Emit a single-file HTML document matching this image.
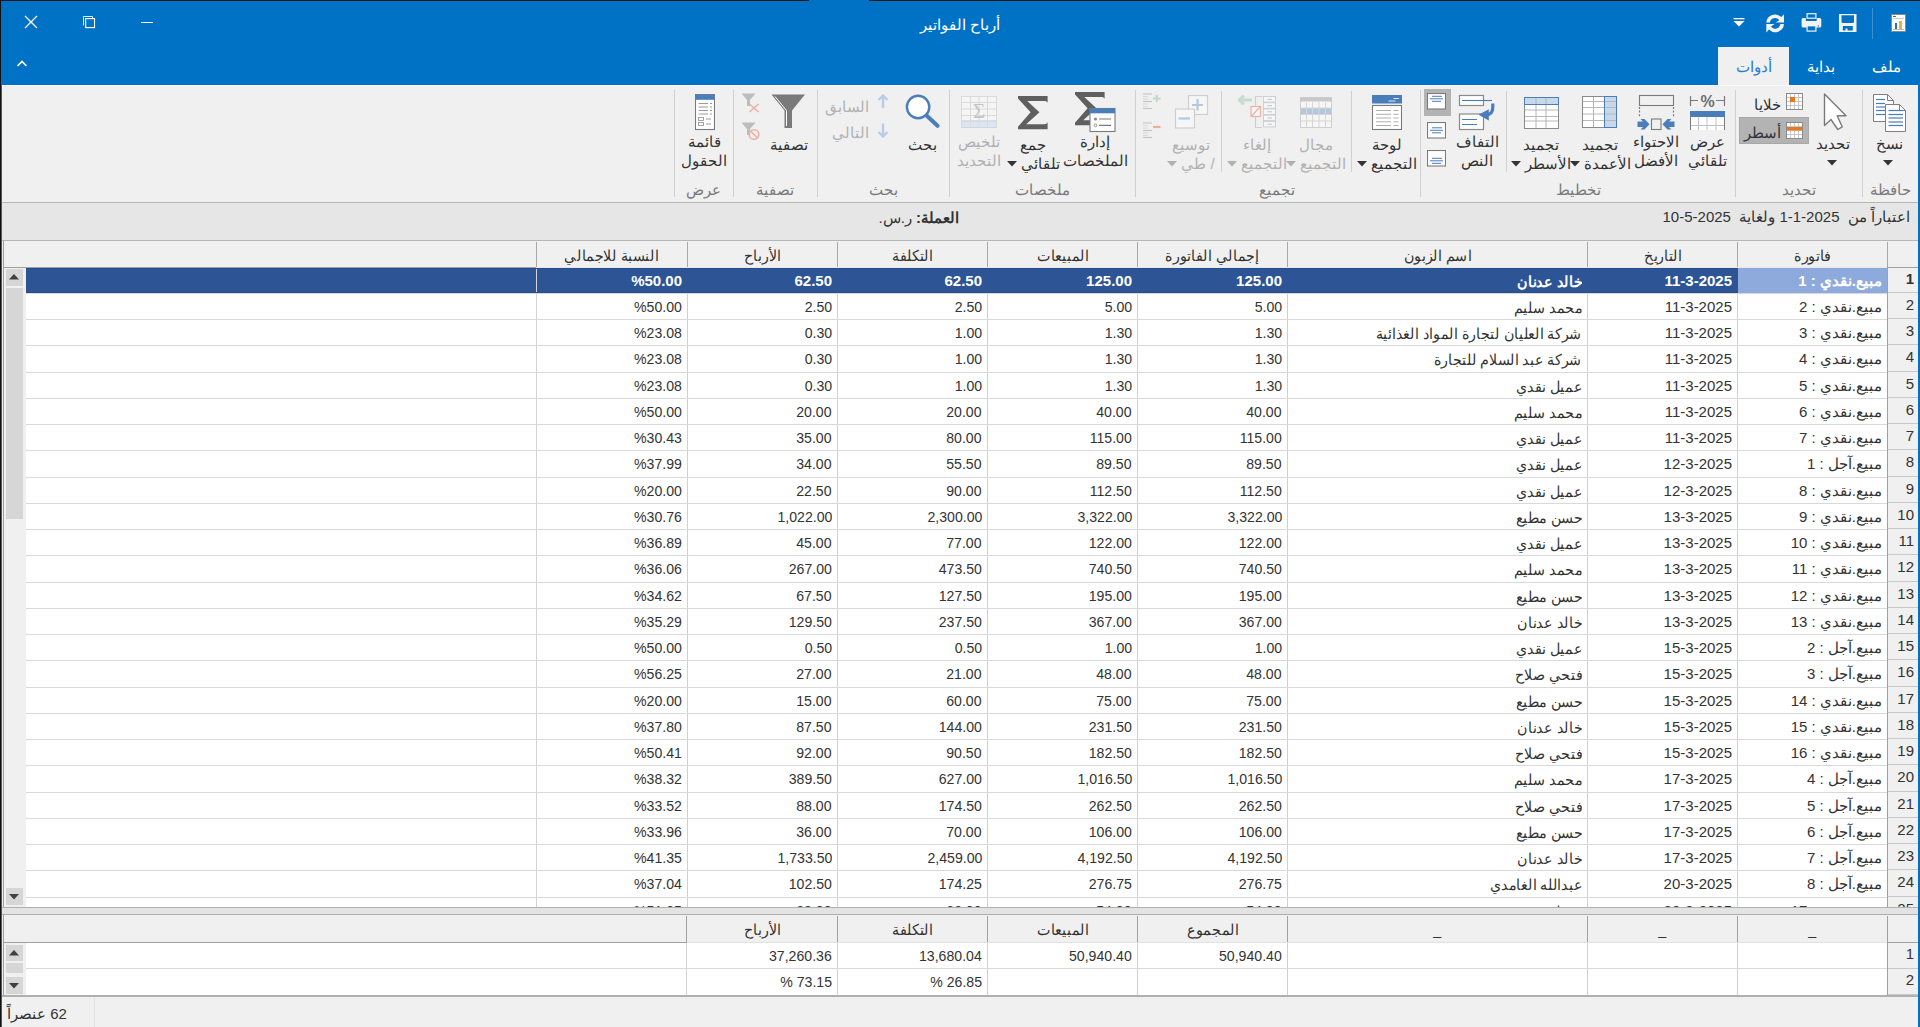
<!DOCTYPE html><html><head><meta charset="utf-8"><style>
*{box-sizing:border-box;margin:0;padding:0}
html,body{width:1920px;height:1027px;overflow:hidden;background:#F0F0F0}
body{position:relative;font-family:"Liberation Sans",sans-serif;font-size:15px;color:#333}
.abs{position:absolute}
.t{position:absolute;white-space:nowrap;line-height:17px}
.r{direction:rtl}
.hl{position:absolute;height:1px}
.vl{position:absolute;width:1px}
.lbl{color:#7A7A7A}
.dis{color:#B0B0B0}
.cell{position:absolute;white-space:nowrap;overflow:hidden;line-height:17px;padding-bottom:6px;direction:rtl;text-align:right}
.num{direction:ltr;unicode-bidi:embed}
</style></head><body>
<div class="abs" style="left:0;top:0;width:1920px;height:85px;background:#0072C6"></div>
<div class="abs" style="left:0;top:0;width:1920px;height:1px;background:#1a1a1a"></div>
<div class="abs" style="left:809px;top:0;width:60px;height:1px;background:#0072C6"></div>
<div class="abs" style="left:0;top:0;width:1px;height:1027px;background:#101010"></div>
<div class="abs" style="left:1px;top:1px;width:1px;height:1026px;background:#0072C6"></div>
<div class="abs" style="left:1918px;top:1px;width:2px;height:1026px;background:#0072C6"></div>
<div class="t r" style="left:860px;width:200px;top:16px;text-align:center;color:#fff;font-size:15px">أرباح الفواتير</div>
<svg class="abs" style="left:24px;top:15px" width="14" height="14" viewBox="0 0 14 14"><path d="M1 1L13 13M13 1L1 13" stroke="#fff" stroke-width="1.3"/></svg>
<svg class="abs" style="left:82px;top:15px" width="15" height="15" viewBox="0 0 15 15"><path d="M1.5 10.5V1.5H10.5V3" fill="none" stroke="#e8eef6" stroke-width="1"/><rect x="3.7" y="3.6" width="8.8" height="9" fill="none" stroke="#fff" stroke-width="1.1"/></svg>
<div class="abs" style="left:141px;top:22px;width:12px;height:1px;background:#fff"></div>
<div class="abs" style="left:1872px;top:8px;width:1px;height:31px;background:#3d8fd3"></div>
<svg class="abs" style="left:1891px;top:14px" width="15" height="18" viewBox="0 0 15 18"><rect x="0.5" y="0.5" width="14" height="17" fill="#fff" stroke="#8a8a8a"/><rect x="2" y="2" width="3" height="1" fill="#2f6db5"/><rect x="2" y="4" width="11" height="1" fill="#ccc"/><rect x="4" y="9" width="2" height="6" fill="#2f6db5"/><rect x="8" y="7" width="3" height="8" fill="#e8b04a"/><rect x="2" y="15" width="11" height="1" fill="#bbb"/></svg>
<svg class="abs" style="left:1839px;top:14px" width="18" height="18" viewBox="0 0 18 18"><path d="M0 0H17.5V18H0Z M2.5 1.3V7.5Q2.5 9 4 9H13.5Q15 9 15 7.5V1.3Z M3.8 12V16.5H6.5V14.5H8.5V16.5H13.8V12Z" fill="#f2f2f2" fill-rule="evenodd"/></svg>
<svg class="abs" style="left:1801px;top:13px" width="21" height="20" viewBox="0 0 21 20"><path d="M2.2 5H4.8V7.9H15.7V5H18.7Q20.3 5 20.3 6.6V13Q20.3 14.6 18.7 14.6H2.2Q0.6 14.6 0.6 13V6.6Q0.6 5 2.2 5Z" fill="#f2f2f2"/><rect x="5.5" y="0.1" width="10" height="5.7" fill="#f2f2f2"/><rect x="6.7" y="1.3" width="7.6" height="3.3" fill="#0072C6"/><rect x="5.5" y="12.3" width="10" height="6.4" fill="#f2f2f2"/><rect x="6.7" y="13.4" width="7.6" height="4.1" fill="#0072C6"/><circle cx="17.4" cy="12.9" r="0.75" fill="#0072C6"/></svg>
<svg class="abs" style="left:1765px;top:13px" width="21" height="21" viewBox="0 0 21 21"><g fill="#f2f2f2"><path id="rh" d="M1.3 9.6A8.8 8.8 0 0 1 16.3 4.1L19 1.3V9.6H10.8L14.3 7.2A5.2 5.2 0 0 0 4.9 9.6Z"/><path d="M1.3 9.6A8.8 8.8 0 0 1 16.3 4.1L19 1.3V9.6H10.8L14.3 7.2A5.2 5.2 0 0 0 4.9 9.6Z" transform="rotate(180 10.15 10.35)"/></g></svg>
<svg class="abs" style="left:1733px;top:18px" width="12" height="9" viewBox="0 0 12 9"><rect x="0.5" y="0" width="11" height="1.3" fill="#fff"/><path d="M0.5 3H11.5L6 8.5Z" fill="#fff"/></svg>
<div class="abs" style="left:1718px;top:47px;width:71px;height:38px;background:#F0F0F0"></div>
<div class="t r" style="left:1718px;width:71px;top:58px;text-align:center;color:#2E7BCF;font-size:15px">أدوات</div>
<div class="t r" style="left:1795px;width:52px;top:58px;text-align:center;color:#fff;font-size:15px">بداية</div>
<div class="t r" style="left:1862px;width:48px;top:58px;text-align:center;color:#fff;font-size:15px">ملف</div>
<svg class="abs" style="left:16px;top:59px" width="12" height="9" viewBox="0 0 12 9"><path d="M1.5 7L6 2.5L10.5 7" fill="none" stroke="#fff" stroke-width="1.6"/></svg>
<div class="abs" style="left:2px;top:85px;width:1916px;height:1px;background:#fbfbfb"></div>
<div class="abs" style="left:2px;top:202px;width:1916px;height:1px;background:#B6B6B6"></div>
<div class="vl" style="left:674px;top:90px;height:107px;background:#D0D0D0"></div>
<div class="vl" style="left:733px;top:90px;height:107px;background:#D0D0D0"></div>
<div class="vl" style="left:817px;top:90px;height:107px;background:#D0D0D0"></div>
<div class="vl" style="left:949px;top:90px;height:107px;background:#D0D0D0"></div>
<div class="vl" style="left:1135px;top:90px;height:107px;background:#D0D0D0"></div>
<div class="vl" style="left:1420px;top:90px;height:107px;background:#D0D0D0"></div>
<div class="vl" style="left:1735px;top:90px;height:107px;background:#D0D0D0"></div>
<div class="vl" style="left:1862px;top:90px;height:107px;background:#D0D0D0"></div>
<div class="vl" style="left:1221px;top:91px;height:81px;background:#D0D0D0"></div>
<div class="vl" style="left:1351px;top:91px;height:81px;background:#D0D0D0"></div>
<div class="vl" style="left:1506px;top:91px;height:81px;background:#D0D0D0"></div>
<div class="t r lbl" style="left:1830px;width:120px;top:181px;text-align:center">حافظة</div>
<div class="t r lbl" style="left:1739px;width:120px;top:181px;text-align:center">تحديد</div>
<div class="t r lbl" style="left:1518px;width:120px;top:181px;text-align:center">تخطيط</div>
<div class="t r lbl" style="left:1217px;width:120px;top:181px;text-align:center">تجميع</div>
<div class="t r lbl" style="left:982px;width:120px;top:181px;text-align:center">ملخصات</div>
<div class="t r lbl" style="left:823px;width:120px;top:181px;text-align:center">بحث</div>
<div class="t r lbl" style="left:715px;width:120px;top:181px;text-align:center">تصفية</div>
<div class="t r lbl" style="left:643px;width:120px;top:181px;text-align:center">عرض</div>
<div class="t r " style="left:1819px;width:140px;top:135px;text-align:center">نسخ</div>
<svg class="abs" style="left:1883px;top:160px" width="10" height="6" viewBox="0 0 10 6"><path d="M0 0H10L5 5.5Z" fill="#333"/></svg>
<div class="t r " style="left:1763px;width:140px;top:135px;text-align:center">تحديد</div>
<svg class="abs" style="left:1827px;top:160px" width="10" height="6" viewBox="0 0 10 6"><path d="M0 0H10L5 5.5Z" fill="#333"/></svg>
<div class="t r " style="left:1637px;width:140px;top:133px;text-align:center">عرض</div>
<div class="t r " style="left:1637px;width:140px;top:152px;text-align:center">تلقائي</div>
<div class="t r " style="left:1586px;width:140px;top:133px;text-align:center">الاحتواء</div>
<div class="t r " style="left:1586px;width:140px;top:152px;text-align:center">الأفضل</div>
<div class="t r " style="left:1530px;width:140px;top:136px;text-align:center">تجميد</div>
<div class="t r " style="left:1530px;width:140px;top:155px;text-align:center">الأعمدة<svg style="display:inline-block;vertical-align:middle;margin-right:4px;position:relative;top:-1px" width="10" height="6" viewBox="0 0 10 6"><path d="M0 0H10L5 5.5Z" fill="#333"/></svg></div>
<div class="t r " style="left:1471px;width:140px;top:136px;text-align:center">تجميد</div>
<div class="t r " style="left:1471px;width:140px;top:155px;text-align:center">الأسطر<svg style="display:inline-block;vertical-align:middle;margin-right:4px;position:relative;top:-1px" width="10" height="6" viewBox="0 0 10 6"><path d="M0 0H10L5 5.5Z" fill="#333"/></svg></div>
<div class="t r " style="left:1407px;width:140px;top:133px;text-align:center">التفاف</div>
<div class="t r " style="left:1407px;width:140px;top:152px;text-align:center">النص</div>
<div class="t r " style="left:1317px;width:140px;top:136px;text-align:center">لوحة</div>
<div class="t r " style="left:1317px;width:140px;top:155px;text-align:center">التجميع<svg style="display:inline-block;vertical-align:middle;margin-right:4px;position:relative;top:-1px" width="10" height="6" viewBox="0 0 10 6"><path d="M0 0H10L5 5.5Z" fill="#333"/></svg></div>
<div class="t r dis" style="left:1246px;width:140px;top:136px;text-align:center">مجال</div>
<div class="t r dis" style="left:1246px;width:140px;top:155px;text-align:center">التجميع<svg style="display:inline-block;vertical-align:middle;margin-right:4px;position:relative;top:-1px" width="10" height="6" viewBox="0 0 10 6"><path d="M0 0H10L5 5.5Z" fill="#b0b0b0"/></svg></div>
<div class="t r dis" style="left:1187px;width:140px;top:136px;text-align:center">إلغاء</div>
<div class="t r dis" style="left:1187px;width:140px;top:155px;text-align:center">التجميع<svg style="display:inline-block;vertical-align:middle;margin-right:4px;position:relative;top:-1px" width="10" height="6" viewBox="0 0 10 6"><path d="M0 0H10L5 5.5Z" fill="#b0b0b0"/></svg></div>
<div class="t r dis" style="left:1121px;width:140px;top:136px;text-align:center">توسيع</div>
<div class="t r dis" style="left:1121px;width:140px;top:155px;text-align:center">/ طي<svg style="display:inline-block;vertical-align:middle;margin-right:4px;position:relative;top:-1px" width="10" height="6" viewBox="0 0 10 6"><path d="M0 0H10L5 5.5Z" fill="#b0b0b0"/></svg></div>
<div class="t r " style="left:1025px;width:140px;top:133px;text-align:center">إدارة</div>
<div class="t r " style="left:1025px;width:140px;top:152px;text-align:center">الملخصات</div>
<div class="t r " style="left:963px;width:140px;top:136px;text-align:center">جمع</div>
<div class="t r " style="left:963px;width:140px;top:155px;text-align:center">تلقائي<svg style="display:inline-block;vertical-align:middle;margin-right:4px;position:relative;top:-1px" width="10" height="6" viewBox="0 0 10 6"><path d="M0 0H10L5 5.5Z" fill="#333"/></svg></div>
<div class="t r dis" style="left:909px;width:140px;top:133px;text-align:center">تلخيص</div>
<div class="t r dis" style="left:909px;width:140px;top:152px;text-align:center">التحديد</div>
<div class="t r " style="left:852px;width:140px;top:136px;text-align:center">بحث</div>
<div class="t r " style="left:719px;width:140px;top:136px;text-align:center">تصفية</div>
<div class="t r " style="left:634px;width:140px;top:133px;text-align:center">قائمة</div>
<div class="t r " style="left:634px;width:140px;top:152px;text-align:center">الحقول</div>
<div class="t r" style="right:139px;top:96px">خلايا</div>
<div class="abs" style="left:1739px;top:117px;width:70px;height:27px;background:#B3B3B3;border:1px solid #A8A8A8"></div>
<div class="t r" style="right:139px;top:124px">أسطر</div>
<div class="t r dis" style="right:1051px;top:98px">السابق</div>
<div class="t r dis" style="right:1051px;top:124px">التالي</div>
<div class="abs" style="left:1424px;top:89px;width:27px;height:27px;background:#B3B3B3"></div>
<svg class="abs" style="left:1872px;top:93px" width="36" height="40" viewBox="0 0 36 40"><path d="M1.5 1.5H15.5L21.5 7.5V28.5H1.5Z" fill="#fff" stroke="#7F7F7F"/><path d="M15.5 1.5V7.5H21.5" fill="none" stroke="#7F7F7F"/><path d="M4 6.5H13" stroke="#4A7EBB" stroke-width="1.2"/><path d="M4 10.5H13" stroke="#4A7EBB" stroke-width="1.2"/><path d="M4 14H13" stroke="#4A7EBB" stroke-width="1.2"/><path d="M4 17.5H13" stroke="#4A7EBB" stroke-width="1.2"/><path d="M4 21.5H13" stroke="#4A7EBB" stroke-width="1.2"/><path d="M13.5 11.5H27.5L33.5 17.5V38.5H13.5Z" fill="#fff" stroke="#7F7F7F"/><path d="M27.5 11.5V17.5H33.5" fill="none" stroke="#7F7F7F"/><path d="M16.5 17.5H31" stroke="#4A7EBB" stroke-width="1.2"/><path d="M16.5 21.5H31" stroke="#4A7EBB" stroke-width="1.2"/><path d="M16.5 25H31" stroke="#4A7EBB" stroke-width="1.2"/><path d="M16.5 29H31" stroke="#4A7EBB" stroke-width="1.2"/><path d="M16.5 32.5H31" stroke="#4A7EBB" stroke-width="1.2"/></svg>
<svg class="abs" style="left:1822px;top:92px" width="27" height="40" viewBox="0 0 27 40"><path d="M2.5 2L2.5 33.5L9 27.5L15.8 37.5L20.2 34.8L15.2 23.8H24Z" fill="#fff" stroke="#7A7A7A" stroke-width="1.4" stroke-linejoin="round"/></svg>
<svg class="abs" style="left:1786px;top:93px" width="17" height="17" viewBox="0 0 17 17"><rect x="0.5" y="0.5" width="16" height="16" fill="#fff" stroke="#8A8A8A"/><path d="M4.5 1V16M1 4.5H16" stroke="#C8C8C8"/><path d="M8.5 1V16M1 8.5H16" stroke="#C8C8C8"/><path d="M12.5 1V16M1 12.5H16" stroke="#C8C8C8"/><rect x="5" y="5" width="3" height="3" fill="#E87722"/><rect x="4" y="4" width="5" height="5" fill="#E87722"/></svg>
<svg class="abs" style="left:1786px;top:122px" width="17" height="17" viewBox="0 0 17 17"><rect x="0.5" y="0.5" width="16" height="16" fill="#fff" stroke="#8A8A8A"/><path d="M4.5 1V16M1 4.5H16" stroke="#C8C8C8"/><path d="M8.5 1V16M1 8.5H16" stroke="#C8C8C8"/><path d="M12.5 1V16M1 12.5H16" stroke="#C8C8C8"/><rect x="1" y="5" width="15" height="3.5" fill="#E87722"/></svg>
<svg class="abs" style="left:1689px;top:94px" width="37" height="37" viewBox="0 0 37 37"><path d="M1.5 2V12M1.5 6.5H9M35.5 2V12M35.5 6.5H27" stroke="#7A7A7A" stroke-width="1.2"/><text x="18.5" y="13.3" text-anchor="middle" font-family="Liberation Sans" font-weight="bold" font-size="16" fill="#6f6f6f">%</text><rect x="1" y="17" width="35" height="6" fill="#4A7EBB"/><rect x="1.5" y="23" width="34" height="13" fill="#fff"/><path d="M9.5 23V36M18 23V36M27 23V36M1.5 31.5H35.5" stroke="#C0C0C0"/><path d="M1.5 23V36M35.5 23V36" stroke="#7A7A7A"/></svg>
<svg class="abs" style="left:1637px;top:94px" width="38" height="37" viewBox="0 0 38 37"><rect x="2.5" y="1.5" width="34" height="10" fill="none" stroke="#7A7A7A" stroke-width="1.1"/><path d="M2.5 13V23M36.5 13V23" stroke="#7A7A7A" stroke-width="1.2" stroke-dasharray="2 1.6"/><rect x="14.5" y="25" width="9.5" height="10.5" fill="none" stroke="#7A7A7A" stroke-width="1.1"/><path d="M0.5 27.5H6L3.5 25H7.5L12.5 30.3L7.5 35.5H3.5L6 33H0.5Z" fill="#4A7EBB"/><path d="M37.5 27.5H32L34.5 25H30.5L25.5 30.3L30.5 35.5H34.5L32 33H37.5Z" fill="#4A7EBB"/></svg>
<svg class="abs" style="left:1582px;top:96px" width="36" height="33" viewBox="0 0 36 33"><rect x="0.5" y="0.5" width="34" height="31" fill="#fff" stroke="#8A8A8A" stroke-width="1"/><rect x="22.5" y="0.5" width="12" height="31" fill="#C5D8EC" stroke="#4A7EBB"/><path d="M11.5 1V31" stroke="#B4B4B4"/><path d="M1 5.5H34" stroke="#B8B8B8"/><path d="M1 11.5H34" stroke="#B8B8B8"/><path d="M1 18H34" stroke="#B8B8B8"/><path d="M1 24.5H34" stroke="#B8B8B8"/><rect x="22.5" y="0.5" width="12" height="31" fill="none" stroke="#4A7EBB"/></svg>
<svg class="abs" style="left:1524px;top:97px" width="36" height="33" viewBox="0 0 36 33"><rect x="0.5" y="0.5" width="34" height="31" fill="#fff" stroke="#8A8A8A"/><rect x="0.5" y="0.5" width="34" height="7" fill="#C5D8EC" stroke="#4A7EBB"/><path d="M12 1V31M22 1V31" stroke="#B4B4B4"/><path d="M1 13H34" stroke="#B8B8B8"/><path d="M1 19.5H34" stroke="#B8B8B8"/><path d="M1 24H34" stroke="#B8B8B8"/><rect x="0.5" y="0.5" width="34" height="7" fill="none" stroke="#4A7EBB"/></svg>
<svg class="abs" style="left:1458px;top:94px" width="39" height="37" viewBox="0 0 39 37"><rect x="1.5" y="1.5" width="24" height="10" fill="#fff" stroke="#8A8A8A" stroke-width="1.2"/><path d="M4 6.5H34" stroke="#4A7EBB" stroke-width="1.1"/><rect x="1.5" y="20" width="24" height="15.5" fill="#fff" stroke="#8A8A8A" stroke-width="1.2"/><path d="M4 25.5H19M4 30.5H19" stroke="#4A7EBB" stroke-width="1.2"/><path d="M34.8 9.5V13Q34.8 20.8 28 20.8" fill="none" stroke="#4A7EBB" stroke-width="3.2"/><path d="M20.5 20.8L30.8 15.3V26.5Z" fill="#4A7EBB"/></svg>
<svg class="abs" style="left:1427px;top:93px" width="19" height="17" viewBox="0 0 19 17"><rect x="0.5" y="0.5" width="18" height="15.5" fill="#fff" stroke="#7A7A7A" stroke-width="1.1"/><path d="M5 3.3H15M3 5.8H16M5 8.3H14" stroke="#4A7EBB" stroke-width="1"/></svg>
<svg class="abs" style="left:1427px;top:122px" width="19" height="17" viewBox="0 0 19 17"><rect x="0.5" y="0.5" width="18" height="15.5" fill="#fff" stroke="#7A7A7A" stroke-width="1.1"/><path d="M5 5.8H15M3 8.3H16M5 10.8H14" stroke="#4A7EBB" stroke-width="1"/></svg>
<svg class="abs" style="left:1427px;top:150px" width="19" height="17" viewBox="0 0 19 17"><rect x="0.5" y="0.5" width="18" height="15.5" fill="#fff" stroke="#7A7A7A" stroke-width="1.1"/><path d="M5 8.3H15M3 10.8H16M5 13.3H14" stroke="#4A7EBB" stroke-width="1"/></svg>
<svg class="abs" style="left:1372px;top:95px" width="30" height="35" viewBox="0 0 30 35"><rect x="0" y="0" width="30" height="8.5" fill="#4A7EBB"/><path d="M16.5 6H23.5M21.5 3.5H27" stroke="#dfe8f3" stroke-width="1"/><rect x="0.5" y="10.5" width="29" height="24" fill="#fff" stroke="#7A7A7A" stroke-width="1.1"/><path d="M4 15.5H19M21.5 15.5H26.5" stroke="#AFAFAF" stroke-width="1"/><path d="M4 19.3H19M21.5 19.3H26.5" stroke="#AFAFAF" stroke-width="1"/><path d="M4 23H19M21.5 23H26.5" stroke="#AFAFAF" stroke-width="1"/><path d="M4 26.8H19M21.5 26.8H26.5" stroke="#AFAFAF" stroke-width="1"/><path d="M4 30.5H19M21.5 30.5H26.5" stroke="#AFAFAF" stroke-width="1"/></svg>
<svg class="abs" style="left:1300px;top:97px" width="32" height="31" viewBox="0 0 32 31"><rect x="0.5" y="0.5" width="31" height="30" fill="#F6F6F6" stroke="#CFCFCF"/><rect x="0.5" y="0.5" width="31" height="4" fill="#C8C8C8"/><rect x="1" y="11" width="30" height="6" fill="#B4C8DC"/><path d="M6.5 5V30" stroke="#D6D6D6"/><path d="M12.5 5V30" stroke="#D6D6D6"/><path d="M19 5V30" stroke="#D6D6D6"/><path d="M25.5 5V30" stroke="#D6D6D6"/><path d="M1 11H31" stroke="#D6D6D6"/><path d="M1 17.5H31" stroke="#D6D6D6"/><path d="M1 24H31" stroke="#D6D6D6"/></svg>
<svg class="abs" style="left:1238px;top:95px" width="38" height="35" viewBox="0 0 38 35"><path d="M0.5 5H14M6 0.5L1 5L6 9.5" fill="none" stroke="#C6DBD1" stroke-width="3"/><path d="M24 1.5H17.5V11M17.5 22V32.5H24" fill="none" stroke="#CFCFCF" stroke-width="1.2"/><rect x="13" y="11.5" width="9.5" height="10" fill="#F6F6F6" stroke="#E8B2A4" stroke-width="1.2"/><path d="M13.5 21L22 12" stroke="#E8B2A4" stroke-width="1.2"/><rect x="25.5" y="1.5" width="12" height="5.6" fill="#F6F6F6" stroke="#CFCFCF"/><path d="M29.5 4.4H34" stroke="#B4C8DC"/><rect x="25.5" y="7.7" width="12" height="5.6" fill="#F6F6F6" stroke="#CFCFCF"/><path d="M29.5 10.6H34" stroke="#B4C8DC"/><rect x="25.5" y="13.9" width="12" height="5.6" fill="#F6F6F6" stroke="#CFCFCF"/><path d="M29.5 16.8H34" stroke="#B4C8DC"/><rect x="25.5" y="20.1" width="12" height="5.6" fill="#F6F6F6" stroke="#CFCFCF"/><path d="M29.5 23.0H34" stroke="#B4C8DC"/><rect x="25.5" y="26.3" width="12" height="5.6" fill="#F6F6F6" stroke="#CFCFCF"/><path d="M29.5 29.2H34" stroke="#B4C8DC"/></svg>
<svg class="abs" style="left:1174px;top:95px" width="35" height="35" viewBox="0 0 35 35"><rect x="14.5" y="0.5" width="19" height="19" fill="#F6F6F6" stroke="#CFCFCF" stroke-width="1.2"/><path d="M18 10H29M23.5 4V15.5" stroke="#B4C8DC" stroke-width="2.2"/><rect x="1.5" y="14" width="19" height="19" fill="#F6F6F6" stroke="#CFCFCF" stroke-width="1.2"/><path d="M4.5 23.5H16" stroke="#B4C8DC" stroke-width="2.2"/></svg>
<svg class="abs" style="left:1143px;top:93px" width="18" height="17" viewBox="0 0 18 17"><path d="M0 1H9" stroke="#C4C4C4" stroke-width="1.1"/><path d="M0 3.5H5" stroke="#DADADA" stroke-width="1.1"/><path d="M0 6H5" stroke="#DADADA" stroke-width="1.1"/><path d="M0 8.5H9" stroke="#C4C4C4" stroke-width="1.1"/><path d="M0 11H5" stroke="#DADADA" stroke-width="1.1"/><path d="M0 13.5H5" stroke="#DADADA" stroke-width="1.1"/><path d="M0 15.5H9" stroke="#C4C4C4" stroke-width="1.1"/><path d="M10 5.5H17.5M13.8 1.8V9.2" stroke="#C0DACB" stroke-width="2.2"/></svg>
<svg class="abs" style="left:1143px;top:122px" width="18" height="17" viewBox="0 0 18 17"><path d="M0 1H9" stroke="#C4C4C4" stroke-width="1.1"/><path d="M0 3.5H5" stroke="#DADADA" stroke-width="1.1"/><path d="M0 6H5" stroke="#DADADA" stroke-width="1.1"/><path d="M0 8.5H9" stroke="#C4C4C4" stroke-width="1.1"/><path d="M0 11H5" stroke="#DADADA" stroke-width="1.1"/><path d="M0 13.5H5" stroke="#DADADA" stroke-width="1.1"/><path d="M0 15.5H9" stroke="#C4C4C4" stroke-width="1.1"/><path d="M10 5H17.5" stroke="#EBAE9C" stroke-width="2.2"/></svg>
<svg class="abs" style="left:1075px;top:92px" width="41" height="41" viewBox="0 0 41 41"><path transform="scale(1.0)" d="M0 0H29.6V6.8C29 5.4 28 4.9 26 4.9H9.3L21.4 16.3L8.2 28.2H26.2C28 28.2 29 27.6 29.6 26V33.2H0V30.8L12.6 16.3L0 2.6Z" fill="#5F5F5F"/><rect x="15" y="16.5" width="25" height="23" fill="#fff" stroke="#7A7A7A" stroke-width="1.1"/><rect x="15" y="16.5" width="25" height="4.8" fill="#4A7EBB"/><circle cx="20.5" cy="27" r="1.6" fill="#8a8a8a"/><circle cx="20.5" cy="33.3" r="1.4" fill="none" stroke="#8a8a8a" stroke-width="0.9"/><path d="M24 27H36M24 33.3H36" stroke="#7a7a7a" stroke-width="1.2"/></svg>
<svg class="abs" style="left:1018px;top:96px" width="30" height="34" viewBox="0 0 30 34"><path transform="scale(1.0)" d="M0 0H29.6V6.8C29 5.4 28 4.9 26 4.9H9.3L21.4 16.3L8.2 28.2H26.2C28 28.2 29 27.6 29.6 26V33.2H0V30.8L12.6 16.3L0 2.6Z" fill="#5F5F5F"/></svg>
<svg class="abs" style="left:961px;top:96px" width="36" height="33" viewBox="0 0 36 33"><rect x="0.5" y="0.5" width="35" height="31" fill="#F5F5F5" stroke="#DADADA"/><rect x="1" y="25" width="34" height="6.5" fill="#DDE6F0"/><path d="M9.5 1V31" stroke="#DADADA"/><path d="M18 1V31" stroke="#DADADA"/><path d="M26.5 1V31" stroke="#DADADA"/><path d="M1 6.5H35" stroke="#DADADA"/><path d="M1 13H35" stroke="#DADADA"/><path d="M1 19.5H35" stroke="#DADADA"/><path d="M1 25H35" stroke="#DADADA"/><path d="M1 25H35M0.5 31.5H35.5" stroke="#C9D7E6"/><text x="18" y="21.5" text-anchor="middle" font-family="Liberation Serif" font-size="21" fill="#C4C4C4">Σ</text></svg>
<svg class="abs" style="left:905px;top:94px" width="35" height="36" viewBox="0 0 35 36"><circle cx="13.1" cy="13" r="11.2" fill="#fff" stroke="#4A7EBB" stroke-width="2.4"/><path d="M21.5 21.5L32.5 31.8" stroke="#4A7EBB" stroke-width="4" stroke-linecap="round"/></svg>
<svg class="abs" style="left:877px;top:94px" width="12" height="15" viewBox="0 0 12 15"><path d="M6 1.5V14M1.5 6L6 1.5L10.5 6" fill="none" stroke="#B8CDE4" stroke-width="2.4"/></svg>
<svg class="abs" style="left:877px;top:123px" width="12" height="15" viewBox="0 0 12 15"><path d="M6 0.5V13M1.5 9L6 13.5L10.5 9" fill="none" stroke="#B8CDE4" stroke-width="2.4"/></svg>
<svg class="abs" style="left:771px;top:94px" width="35" height="35" viewBox="0 0 35 35"><path d="M0.5 0.5H34L21 16.5V34H13.5V16.5Z" fill="#7A7A7A"/><path d="M4 2.5L15.5 16.5V32" fill="none" stroke="#fff" stroke-width="1"/></svg>
<svg class="abs" style="left:741px;top:93px" width="20" height="20" viewBox="0 0 20 20"><path d="M0.5 0.5H14.5L9 7V13H6V7Z" fill="#BDBDBD"/><path d="M8.5 11L17.5 19M17.5 11L8.5 19" stroke="#EBB1A2" stroke-width="1.6"/></svg>
<svg class="abs" style="left:741px;top:122px" width="20" height="20" viewBox="0 0 20 20"><path d="M0.5 0.5H14.5L9 7V13H6V7Z" fill="#BDBDBD"/><circle cx="13" cy="12.5" r="4.8" fill="#F0F0F0" stroke="#EBB1A2" stroke-width="1.6"/><path d="M10 9.5L16 15.5" stroke="#EBB1A2" stroke-width="1.6"/></svg>
<svg class="abs" style="left:695px;top:94px" width="20" height="37" viewBox="0 0 20 37"><rect x="0.5" y="0.5" width="19" height="35" fill="#fff" stroke="#7A7A7A" stroke-width="1.1"/><rect x="0.5" y="0.5" width="19" height="5.3" fill="#4A7EBB"/><path d="M3.5 9.5H13M15 9.5H17" stroke="#9A9A9A" stroke-width="1"/><path d="M3.5 13H13M15 13H17" stroke="#9A9A9A" stroke-width="1"/><path d="M3.5 16.5H13M15 16.5H17" stroke="#9A9A9A" stroke-width="1"/><path d="M3.5 20H13M15 20H17" stroke="#9A9A9A" stroke-width="1"/><rect x="3.5" y="23.5" width="5" height="3" fill="none" stroke="#9A9A9A" stroke-width="0.9"/><rect x="3.5" y="28.5" width="5" height="3" fill="none" stroke="#9A9A9A" stroke-width="0.9"/><path d="M11 25H16M11 30H16" stroke="#9A9A9A"/></svg>
<div class="abs" style="left:2px;top:203px;width:1916px;height:37px;background:#E6E6E6"></div>
<div class="abs" style="left:2px;top:240px;width:1916px;height:1px;background:#B6B6B6"></div>
<div class="t r" style="right:10px;top:208px"><span>اعتباراً من</span>&nbsp;&nbsp;<span class="num">1-1-2025</span> ولغاية&nbsp;&nbsp;<span class="num">10-5-2025</span></div>
<div class="t r" style="right:961px;top:209px"><b>العملة:</b> ر.س.</div>
<div class="abs" style="left:3px;top:241px;width:1915px;height:666px;background:#fff"></div>
<div class="vl" style="left:3px;top:241px;height:666px;background:#A0A0A0"></div>
<div class="abs" style="left:4px;top:241px;width:1914px;height:26px;background:#F0F0F0"></div>
<div class="hl" style="left:4px;top:267px;width:532px;background:#A0A0A0"></div>
<div class="hl" style="left:536px;top:267px;width:1351px;background:#E9E8E4"></div>
<div class="hl" style="left:1887px;top:267px;width:31px;background:#A0A0A0"></div>
<div class="vl" style="left:536px;top:242px;height:25px;background:#A8A8A8"></div>
<div class="vl" style="left:687px;top:242px;height:25px;background:#A8A8A8"></div>
<div class="vl" style="left:837px;top:242px;height:25px;background:#A8A8A8"></div>
<div class="vl" style="left:987px;top:242px;height:25px;background:#A8A8A8"></div>
<div class="vl" style="left:1137px;top:242px;height:25px;background:#A8A8A8"></div>
<div class="vl" style="left:1287px;top:242px;height:25px;background:#A8A8A8"></div>
<div class="vl" style="left:1587px;top:242px;height:25px;background:#A8A8A8"></div>
<div class="vl" style="left:1737px;top:242px;height:25px;background:#A8A8A8"></div>
<div class="vl" style="left:1887px;top:242px;height:25px;background:#A8A8A8"></div>
<div class="cell" style="left:1738px;width:149px;top:247px;text-align:center"><span style="display:inline-block;transform:scaleX(.95)">فاتورة</span></div>
<div class="cell" style="left:1588px;width:149px;top:247px;text-align:center"><span style="display:inline-block;transform:scaleX(.95)">التاريخ</span></div>
<div class="cell" style="left:1288px;width:299px;top:247px;text-align:center"><span style="display:inline-block;transform:scaleX(.95)">اسم الزبون</span></div>
<div class="cell" style="left:1138px;width:149px;top:247px;text-align:center"><span style="display:inline-block;transform:scaleX(.95)">إجمالي الفاتورة</span></div>
<div class="cell" style="left:988px;width:149px;top:247px;text-align:center"><span style="display:inline-block;transform:scaleX(.95)">المبيعات</span></div>
<div class="cell" style="left:838px;width:149px;top:247px;text-align:center"><span style="display:inline-block;transform:scaleX(.95)">التكلفة</span></div>
<div class="cell" style="left:688px;width:149px;top:247px;text-align:center"><span style="display:inline-block;transform:scaleX(.95)">الأرباح</span></div>
<div class="cell" style="left:537px;width:150px;top:247px;text-align:center"><span style="display:inline-block;transform:scaleX(.95)">النسبة للاجمالي</span></div>
<div class="abs" style="left:26px;top:268px;width:1892px;height:639px;overflow:hidden">
<div class="vl" style="left:510px;top:0;height:639px;background:#D4D4D4"></div>
<div class="vl" style="left:661px;top:0;height:639px;background:#C6D1E2"></div>
<div class="vl" style="left:811px;top:0;height:639px;background:#C6D1E2"></div>
<div class="vl" style="left:961px;top:0;height:639px;background:#C6D1E2"></div>
<div class="vl" style="left:1111px;top:0;height:639px;background:#C6D1E2"></div>
<div class="vl" style="left:1261px;top:0;height:639px;background:#C6D1E2"></div>
<div class="vl" style="left:1561px;top:0;height:639px;background:#C6D1E2"></div>
<div class="vl" style="left:1711px;top:0;height:639px;background:#C6D1E2"></div>
<div class="vl" style="left:1861px;top:0;height:639px;background:#A0A0A0"></div>
<div class="abs" style="left:0;top:0px;width:510px;height:25px;background:#2D5596"></div>
<div class="abs" style="left:511px;top:0px;width:1201px;height:25px;background:#2D5596"></div>
<div class="abs" style="left:0;top:0px;width:1712px;height:1px;background:#264D8F"></div>
<div class="abs" style="left:0;top:24px;width:1712px;height:1px;background:#264D8F"></div>
<div class="abs" style="left:1712px;top:0px;width:149px;height:25px;background:#8EA9DB"></div>
<div class="hl" style="left:0;top:25px;width:1861px;background:#D9D9D9"></div>
<div class="abs" style="left:1862px;top:-1px;width:30px;height:26px;background:#F0F0F0;border-bottom:1px solid #C8C8C8"></div>
<div class="cell" style="left:1862px;width:26px;top:2px;font-weight:bold;">1</div>
<div class="cell" style="left:1712px;width:144px;top:4px;font-weight:bold;color:#fff;">مبيع.نقدي : 1</div>
<div class="cell" style="left:1562px;width:144px;top:4px;font-weight:bold;color:#fff;">11-3-2025</div>
<div class="cell" style="left:1262px;width:294px;top:4px;font-weight:bold;color:#fff;"><span style="display:inline-block;transform:translateY(1px) scaleX(.95);transform-origin:100% 50%">خالد عدنان</span></div>
<div class="cell" style="left:1112px;width:144px;top:4px;font-weight:bold;color:#fff;">125.00</div>
<div class="cell" style="left:962px;width:144px;top:4px;font-weight:bold;color:#fff;">125.00</div>
<div class="cell" style="left:812px;width:144px;top:4px;font-weight:bold;color:#fff;">62.50</div>
<div class="cell" style="left:662px;width:144px;top:4px;font-weight:bold;color:#fff;">62.50</div>
<div class="cell" style="left:511px;width:145px;top:4px;font-weight:bold;color:#fff;">%50.00</div>
<div class="hl" style="left:0;top:51px;width:1861px;background:#D9D9D9"></div>
<div class="abs" style="left:1862px;top:25px;width:30px;height:26px;background:#F0F0F0;border-bottom:1px solid #C8C8C8"></div>
<div class="cell" style="left:1862px;width:26px;top:28px;">2</div>
<div class="cell" style="left:1712px;width:144px;top:30px;">مبيع.نقدي : 2</div>
<div class="cell" style="left:1562px;width:144px;top:30px;">11-3-2025</div>
<div class="cell" style="left:1262px;width:294px;top:30px;"><span style="display:inline-block;transform:translateY(1px) scaleX(.95);transform-origin:100% 50%">محمد سليم</span></div>
<div class="cell" style="left:1112px;width:144px;top:30px;"><span style="display:inline-block;transform:scaleX(.94);transform-origin:100% 50%">5.00</span></div>
<div class="cell" style="left:962px;width:144px;top:30px;"><span style="display:inline-block;transform:scaleX(.94);transform-origin:100% 50%">5.00</span></div>
<div class="cell" style="left:812px;width:144px;top:30px;"><span style="display:inline-block;transform:scaleX(.94);transform-origin:100% 50%">2.50</span></div>
<div class="cell" style="left:662px;width:144px;top:30px;"><span style="display:inline-block;transform:scaleX(.94);transform-origin:100% 50%">2.50</span></div>
<div class="cell" style="left:511px;width:145px;top:30px;"><span style="display:inline-block;transform:scaleX(.94);transform-origin:100% 50%">%50.00</span></div>
<div class="hl" style="left:0;top:77px;width:1861px;background:#D9D9D9"></div>
<div class="abs" style="left:1862px;top:51px;width:30px;height:26px;background:#F0F0F0;border-bottom:1px solid #C8C8C8"></div>
<div class="cell" style="left:1862px;width:26px;top:54px;">3</div>
<div class="cell" style="left:1712px;width:144px;top:56px;">مبيع.نقدي : 3</div>
<div class="cell" style="left:1562px;width:144px;top:56px;">11-3-2025</div>
<div class="cell" style="left:1262px;width:294px;top:56px;"><span style="display:inline-block;transform:translateY(1px) scaleX(.95);transform-origin:100% 50%">شركة العليان لتجارة المواد الغذائية</span></div>
<div class="cell" style="left:1112px;width:144px;top:56px;"><span style="display:inline-block;transform:scaleX(.94);transform-origin:100% 50%">1.30</span></div>
<div class="cell" style="left:962px;width:144px;top:56px;"><span style="display:inline-block;transform:scaleX(.94);transform-origin:100% 50%">1.30</span></div>
<div class="cell" style="left:812px;width:144px;top:56px;"><span style="display:inline-block;transform:scaleX(.94);transform-origin:100% 50%">1.00</span></div>
<div class="cell" style="left:662px;width:144px;top:56px;"><span style="display:inline-block;transform:scaleX(.94);transform-origin:100% 50%">0.30</span></div>
<div class="cell" style="left:511px;width:145px;top:56px;"><span style="display:inline-block;transform:scaleX(.94);transform-origin:100% 50%">%23.08</span></div>
<div class="hl" style="left:0;top:104px;width:1861px;background:#D9D9D9"></div>
<div class="abs" style="left:1862px;top:77px;width:30px;height:27px;background:#F0F0F0;border-bottom:1px solid #C8C8C8"></div>
<div class="cell" style="left:1862px;width:26px;top:80px;">4</div>
<div class="cell" style="left:1712px;width:144px;top:82px;">مبيع.نقدي : 4</div>
<div class="cell" style="left:1562px;width:144px;top:82px;">11-3-2025</div>
<div class="cell" style="left:1262px;width:294px;top:82px;"><span style="display:inline-block;transform:translateY(1px) scaleX(.95);transform-origin:100% 50%">شركة عبد السلام للتجارة</span></div>
<div class="cell" style="left:1112px;width:144px;top:82px;"><span style="display:inline-block;transform:scaleX(.94);transform-origin:100% 50%">1.30</span></div>
<div class="cell" style="left:962px;width:144px;top:82px;"><span style="display:inline-block;transform:scaleX(.94);transform-origin:100% 50%">1.30</span></div>
<div class="cell" style="left:812px;width:144px;top:82px;"><span style="display:inline-block;transform:scaleX(.94);transform-origin:100% 50%">1.00</span></div>
<div class="cell" style="left:662px;width:144px;top:82px;"><span style="display:inline-block;transform:scaleX(.94);transform-origin:100% 50%">0.30</span></div>
<div class="cell" style="left:511px;width:145px;top:82px;"><span style="display:inline-block;transform:scaleX(.94);transform-origin:100% 50%">%23.08</span></div>
<div class="hl" style="left:0;top:130px;width:1861px;background:#D9D9D9"></div>
<div class="abs" style="left:1862px;top:104px;width:30px;height:26px;background:#F0F0F0;border-bottom:1px solid #C8C8C8"></div>
<div class="cell" style="left:1862px;width:26px;top:107px;">5</div>
<div class="cell" style="left:1712px;width:144px;top:109px;">مبيع.نقدي : 5</div>
<div class="cell" style="left:1562px;width:144px;top:109px;">11-3-2025</div>
<div class="cell" style="left:1262px;width:294px;top:109px;"><span style="display:inline-block;transform:translateY(1px) scaleX(.95);transform-origin:100% 50%">عميل نقدي</span></div>
<div class="cell" style="left:1112px;width:144px;top:109px;"><span style="display:inline-block;transform:scaleX(.94);transform-origin:100% 50%">1.30</span></div>
<div class="cell" style="left:962px;width:144px;top:109px;"><span style="display:inline-block;transform:scaleX(.94);transform-origin:100% 50%">1.30</span></div>
<div class="cell" style="left:812px;width:144px;top:109px;"><span style="display:inline-block;transform:scaleX(.94);transform-origin:100% 50%">1.00</span></div>
<div class="cell" style="left:662px;width:144px;top:109px;"><span style="display:inline-block;transform:scaleX(.94);transform-origin:100% 50%">0.30</span></div>
<div class="cell" style="left:511px;width:145px;top:109px;"><span style="display:inline-block;transform:scaleX(.94);transform-origin:100% 50%">%23.08</span></div>
<div class="hl" style="left:0;top:156px;width:1861px;background:#D9D9D9"></div>
<div class="abs" style="left:1862px;top:130px;width:30px;height:26px;background:#F0F0F0;border-bottom:1px solid #C8C8C8"></div>
<div class="cell" style="left:1862px;width:26px;top:133px;">6</div>
<div class="cell" style="left:1712px;width:144px;top:135px;">مبيع.نقدي : 6</div>
<div class="cell" style="left:1562px;width:144px;top:135px;">11-3-2025</div>
<div class="cell" style="left:1262px;width:294px;top:135px;"><span style="display:inline-block;transform:translateY(1px) scaleX(.95);transform-origin:100% 50%">محمد سليم</span></div>
<div class="cell" style="left:1112px;width:144px;top:135px;"><span style="display:inline-block;transform:scaleX(.94);transform-origin:100% 50%">40.00</span></div>
<div class="cell" style="left:962px;width:144px;top:135px;"><span style="display:inline-block;transform:scaleX(.94);transform-origin:100% 50%">40.00</span></div>
<div class="cell" style="left:812px;width:144px;top:135px;"><span style="display:inline-block;transform:scaleX(.94);transform-origin:100% 50%">20.00</span></div>
<div class="cell" style="left:662px;width:144px;top:135px;"><span style="display:inline-block;transform:scaleX(.94);transform-origin:100% 50%">20.00</span></div>
<div class="cell" style="left:511px;width:145px;top:135px;"><span style="display:inline-block;transform:scaleX(.94);transform-origin:100% 50%">%50.00</span></div>
<div class="hl" style="left:0;top:182px;width:1861px;background:#D9D9D9"></div>
<div class="abs" style="left:1862px;top:156px;width:30px;height:26px;background:#F0F0F0;border-bottom:1px solid #C8C8C8"></div>
<div class="cell" style="left:1862px;width:26px;top:159px;">7</div>
<div class="cell" style="left:1712px;width:144px;top:161px;">مبيع.نقدي : 7</div>
<div class="cell" style="left:1562px;width:144px;top:161px;">11-3-2025</div>
<div class="cell" style="left:1262px;width:294px;top:161px;"><span style="display:inline-block;transform:translateY(1px) scaleX(.95);transform-origin:100% 50%">عميل نقدي</span></div>
<div class="cell" style="left:1112px;width:144px;top:161px;"><span style="display:inline-block;transform:scaleX(.94);transform-origin:100% 50%">115.00</span></div>
<div class="cell" style="left:962px;width:144px;top:161px;"><span style="display:inline-block;transform:scaleX(.94);transform-origin:100% 50%">115.00</span></div>
<div class="cell" style="left:812px;width:144px;top:161px;"><span style="display:inline-block;transform:scaleX(.94);transform-origin:100% 50%">80.00</span></div>
<div class="cell" style="left:662px;width:144px;top:161px;"><span style="display:inline-block;transform:scaleX(.94);transform-origin:100% 50%">35.00</span></div>
<div class="cell" style="left:511px;width:145px;top:161px;"><span style="display:inline-block;transform:scaleX(.94);transform-origin:100% 50%">%30.43</span></div>
<div class="hl" style="left:0;top:209px;width:1861px;background:#D9D9D9"></div>
<div class="abs" style="left:1862px;top:182px;width:30px;height:27px;background:#F0F0F0;border-bottom:1px solid #C8C8C8"></div>
<div class="cell" style="left:1862px;width:26px;top:185px;">8</div>
<div class="cell" style="left:1712px;width:144px;top:187px;">مبيع.آجل : 1</div>
<div class="cell" style="left:1562px;width:144px;top:187px;">12-3-2025</div>
<div class="cell" style="left:1262px;width:294px;top:187px;"><span style="display:inline-block;transform:translateY(1px) scaleX(.95);transform-origin:100% 50%">عميل نقدي</span></div>
<div class="cell" style="left:1112px;width:144px;top:187px;"><span style="display:inline-block;transform:scaleX(.94);transform-origin:100% 50%">89.50</span></div>
<div class="cell" style="left:962px;width:144px;top:187px;"><span style="display:inline-block;transform:scaleX(.94);transform-origin:100% 50%">89.50</span></div>
<div class="cell" style="left:812px;width:144px;top:187px;"><span style="display:inline-block;transform:scaleX(.94);transform-origin:100% 50%">55.50</span></div>
<div class="cell" style="left:662px;width:144px;top:187px;"><span style="display:inline-block;transform:scaleX(.94);transform-origin:100% 50%">34.00</span></div>
<div class="cell" style="left:511px;width:145px;top:187px;"><span style="display:inline-block;transform:scaleX(.94);transform-origin:100% 50%">%37.99</span></div>
<div class="hl" style="left:0;top:235px;width:1861px;background:#D9D9D9"></div>
<div class="abs" style="left:1862px;top:209px;width:30px;height:26px;background:#F0F0F0;border-bottom:1px solid #C8C8C8"></div>
<div class="cell" style="left:1862px;width:26px;top:212px;">9</div>
<div class="cell" style="left:1712px;width:144px;top:214px;">مبيع.نقدي : 8</div>
<div class="cell" style="left:1562px;width:144px;top:214px;">12-3-2025</div>
<div class="cell" style="left:1262px;width:294px;top:214px;"><span style="display:inline-block;transform:translateY(1px) scaleX(.95);transform-origin:100% 50%">عميل نقدي</span></div>
<div class="cell" style="left:1112px;width:144px;top:214px;"><span style="display:inline-block;transform:scaleX(.94);transform-origin:100% 50%">112.50</span></div>
<div class="cell" style="left:962px;width:144px;top:214px;"><span style="display:inline-block;transform:scaleX(.94);transform-origin:100% 50%">112.50</span></div>
<div class="cell" style="left:812px;width:144px;top:214px;"><span style="display:inline-block;transform:scaleX(.94);transform-origin:100% 50%">90.00</span></div>
<div class="cell" style="left:662px;width:144px;top:214px;"><span style="display:inline-block;transform:scaleX(.94);transform-origin:100% 50%">22.50</span></div>
<div class="cell" style="left:511px;width:145px;top:214px;"><span style="display:inline-block;transform:scaleX(.94);transform-origin:100% 50%">%20.00</span></div>
<div class="hl" style="left:0;top:261px;width:1861px;background:#D9D9D9"></div>
<div class="abs" style="left:1862px;top:235px;width:30px;height:26px;background:#F0F0F0;border-bottom:1px solid #C8C8C8"></div>
<div class="cell" style="left:1862px;width:26px;top:238px;">10</div>
<div class="cell" style="left:1712px;width:144px;top:240px;">مبيع.نقدي : 9</div>
<div class="cell" style="left:1562px;width:144px;top:240px;">13-3-2025</div>
<div class="cell" style="left:1262px;width:294px;top:240px;"><span style="display:inline-block;transform:translateY(1px) scaleX(.95);transform-origin:100% 50%">حسن مطيع</span></div>
<div class="cell" style="left:1112px;width:144px;top:240px;"><span style="display:inline-block;transform:scaleX(.94);transform-origin:100% 50%">3,322.00</span></div>
<div class="cell" style="left:962px;width:144px;top:240px;"><span style="display:inline-block;transform:scaleX(.94);transform-origin:100% 50%">3,322.00</span></div>
<div class="cell" style="left:812px;width:144px;top:240px;"><span style="display:inline-block;transform:scaleX(.94);transform-origin:100% 50%">2,300.00</span></div>
<div class="cell" style="left:662px;width:144px;top:240px;"><span style="display:inline-block;transform:scaleX(.94);transform-origin:100% 50%">1,022.00</span></div>
<div class="cell" style="left:511px;width:145px;top:240px;"><span style="display:inline-block;transform:scaleX(.94);transform-origin:100% 50%">%30.76</span></div>
<div class="hl" style="left:0;top:287px;width:1861px;background:#D9D9D9"></div>
<div class="abs" style="left:1862px;top:261px;width:30px;height:26px;background:#F0F0F0;border-bottom:1px solid #C8C8C8"></div>
<div class="cell" style="left:1862px;width:26px;top:264px;">11</div>
<div class="cell" style="left:1712px;width:144px;top:266px;">مبيع.نقدي : 10</div>
<div class="cell" style="left:1562px;width:144px;top:266px;">13-3-2025</div>
<div class="cell" style="left:1262px;width:294px;top:266px;"><span style="display:inline-block;transform:translateY(1px) scaleX(.95);transform-origin:100% 50%">عميل نقدي</span></div>
<div class="cell" style="left:1112px;width:144px;top:266px;"><span style="display:inline-block;transform:scaleX(.94);transform-origin:100% 50%">122.00</span></div>
<div class="cell" style="left:962px;width:144px;top:266px;"><span style="display:inline-block;transform:scaleX(.94);transform-origin:100% 50%">122.00</span></div>
<div class="cell" style="left:812px;width:144px;top:266px;"><span style="display:inline-block;transform:scaleX(.94);transform-origin:100% 50%">77.00</span></div>
<div class="cell" style="left:662px;width:144px;top:266px;"><span style="display:inline-block;transform:scaleX(.94);transform-origin:100% 50%">45.00</span></div>
<div class="cell" style="left:511px;width:145px;top:266px;"><span style="display:inline-block;transform:scaleX(.94);transform-origin:100% 50%">%36.89</span></div>
<div class="hl" style="left:0;top:314px;width:1861px;background:#D9D9D9"></div>
<div class="abs" style="left:1862px;top:287px;width:30px;height:27px;background:#F0F0F0;border-bottom:1px solid #C8C8C8"></div>
<div class="cell" style="left:1862px;width:26px;top:290px;">12</div>
<div class="cell" style="left:1712px;width:144px;top:292px;">مبيع.نقدي : 11</div>
<div class="cell" style="left:1562px;width:144px;top:292px;">13-3-2025</div>
<div class="cell" style="left:1262px;width:294px;top:292px;"><span style="display:inline-block;transform:translateY(1px) scaleX(.95);transform-origin:100% 50%">محمد سليم</span></div>
<div class="cell" style="left:1112px;width:144px;top:292px;"><span style="display:inline-block;transform:scaleX(.94);transform-origin:100% 50%">740.50</span></div>
<div class="cell" style="left:962px;width:144px;top:292px;"><span style="display:inline-block;transform:scaleX(.94);transform-origin:100% 50%">740.50</span></div>
<div class="cell" style="left:812px;width:144px;top:292px;"><span style="display:inline-block;transform:scaleX(.94);transform-origin:100% 50%">473.50</span></div>
<div class="cell" style="left:662px;width:144px;top:292px;"><span style="display:inline-block;transform:scaleX(.94);transform-origin:100% 50%">267.00</span></div>
<div class="cell" style="left:511px;width:145px;top:292px;"><span style="display:inline-block;transform:scaleX(.94);transform-origin:100% 50%">%36.06</span></div>
<div class="hl" style="left:0;top:340px;width:1861px;background:#D9D9D9"></div>
<div class="abs" style="left:1862px;top:314px;width:30px;height:26px;background:#F0F0F0;border-bottom:1px solid #C8C8C8"></div>
<div class="cell" style="left:1862px;width:26px;top:317px;">13</div>
<div class="cell" style="left:1712px;width:144px;top:319px;">مبيع.نقدي : 12</div>
<div class="cell" style="left:1562px;width:144px;top:319px;">13-3-2025</div>
<div class="cell" style="left:1262px;width:294px;top:319px;"><span style="display:inline-block;transform:translateY(1px) scaleX(.95);transform-origin:100% 50%">حسن مطيع</span></div>
<div class="cell" style="left:1112px;width:144px;top:319px;"><span style="display:inline-block;transform:scaleX(.94);transform-origin:100% 50%">195.00</span></div>
<div class="cell" style="left:962px;width:144px;top:319px;"><span style="display:inline-block;transform:scaleX(.94);transform-origin:100% 50%">195.00</span></div>
<div class="cell" style="left:812px;width:144px;top:319px;"><span style="display:inline-block;transform:scaleX(.94);transform-origin:100% 50%">127.50</span></div>
<div class="cell" style="left:662px;width:144px;top:319px;"><span style="display:inline-block;transform:scaleX(.94);transform-origin:100% 50%">67.50</span></div>
<div class="cell" style="left:511px;width:145px;top:319px;"><span style="display:inline-block;transform:scaleX(.94);transform-origin:100% 50%">%34.62</span></div>
<div class="hl" style="left:0;top:366px;width:1861px;background:#D9D9D9"></div>
<div class="abs" style="left:1862px;top:340px;width:30px;height:26px;background:#F0F0F0;border-bottom:1px solid #C8C8C8"></div>
<div class="cell" style="left:1862px;width:26px;top:343px;">14</div>
<div class="cell" style="left:1712px;width:144px;top:345px;">مبيع.نقدي : 13</div>
<div class="cell" style="left:1562px;width:144px;top:345px;">13-3-2025</div>
<div class="cell" style="left:1262px;width:294px;top:345px;"><span style="display:inline-block;transform:translateY(1px) scaleX(.95);transform-origin:100% 50%">خالد عدنان</span></div>
<div class="cell" style="left:1112px;width:144px;top:345px;"><span style="display:inline-block;transform:scaleX(.94);transform-origin:100% 50%">367.00</span></div>
<div class="cell" style="left:962px;width:144px;top:345px;"><span style="display:inline-block;transform:scaleX(.94);transform-origin:100% 50%">367.00</span></div>
<div class="cell" style="left:812px;width:144px;top:345px;"><span style="display:inline-block;transform:scaleX(.94);transform-origin:100% 50%">237.50</span></div>
<div class="cell" style="left:662px;width:144px;top:345px;"><span style="display:inline-block;transform:scaleX(.94);transform-origin:100% 50%">129.50</span></div>
<div class="cell" style="left:511px;width:145px;top:345px;"><span style="display:inline-block;transform:scaleX(.94);transform-origin:100% 50%">%35.29</span></div>
<div class="hl" style="left:0;top:392px;width:1861px;background:#D9D9D9"></div>
<div class="abs" style="left:1862px;top:366px;width:30px;height:26px;background:#F0F0F0;border-bottom:1px solid #C8C8C8"></div>
<div class="cell" style="left:1862px;width:26px;top:369px;">15</div>
<div class="cell" style="left:1712px;width:144px;top:371px;">مبيع.آجل : 2</div>
<div class="cell" style="left:1562px;width:144px;top:371px;">15-3-2025</div>
<div class="cell" style="left:1262px;width:294px;top:371px;"><span style="display:inline-block;transform:translateY(1px) scaleX(.95);transform-origin:100% 50%">عميل نقدي</span></div>
<div class="cell" style="left:1112px;width:144px;top:371px;"><span style="display:inline-block;transform:scaleX(.94);transform-origin:100% 50%">1.00</span></div>
<div class="cell" style="left:962px;width:144px;top:371px;"><span style="display:inline-block;transform:scaleX(.94);transform-origin:100% 50%">1.00</span></div>
<div class="cell" style="left:812px;width:144px;top:371px;"><span style="display:inline-block;transform:scaleX(.94);transform-origin:100% 50%">0.50</span></div>
<div class="cell" style="left:662px;width:144px;top:371px;"><span style="display:inline-block;transform:scaleX(.94);transform-origin:100% 50%">0.50</span></div>
<div class="cell" style="left:511px;width:145px;top:371px;"><span style="display:inline-block;transform:scaleX(.94);transform-origin:100% 50%">%50.00</span></div>
<div class="hl" style="left:0;top:419px;width:1861px;background:#D9D9D9"></div>
<div class="abs" style="left:1862px;top:392px;width:30px;height:27px;background:#F0F0F0;border-bottom:1px solid #C8C8C8"></div>
<div class="cell" style="left:1862px;width:26px;top:395px;">16</div>
<div class="cell" style="left:1712px;width:144px;top:397px;">مبيع.آجل : 3</div>
<div class="cell" style="left:1562px;width:144px;top:397px;">15-3-2025</div>
<div class="cell" style="left:1262px;width:294px;top:397px;"><span style="display:inline-block;transform:translateY(1px) scaleX(.95);transform-origin:100% 50%">فتحي صلاح</span></div>
<div class="cell" style="left:1112px;width:144px;top:397px;"><span style="display:inline-block;transform:scaleX(.94);transform-origin:100% 50%">48.00</span></div>
<div class="cell" style="left:962px;width:144px;top:397px;"><span style="display:inline-block;transform:scaleX(.94);transform-origin:100% 50%">48.00</span></div>
<div class="cell" style="left:812px;width:144px;top:397px;"><span style="display:inline-block;transform:scaleX(.94);transform-origin:100% 50%">21.00</span></div>
<div class="cell" style="left:662px;width:144px;top:397px;"><span style="display:inline-block;transform:scaleX(.94);transform-origin:100% 50%">27.00</span></div>
<div class="cell" style="left:511px;width:145px;top:397px;"><span style="display:inline-block;transform:scaleX(.94);transform-origin:100% 50%">%56.25</span></div>
<div class="hl" style="left:0;top:445px;width:1861px;background:#D9D9D9"></div>
<div class="abs" style="left:1862px;top:419px;width:30px;height:26px;background:#F0F0F0;border-bottom:1px solid #C8C8C8"></div>
<div class="cell" style="left:1862px;width:26px;top:422px;">17</div>
<div class="cell" style="left:1712px;width:144px;top:424px;">مبيع.نقدي : 14</div>
<div class="cell" style="left:1562px;width:144px;top:424px;">15-3-2025</div>
<div class="cell" style="left:1262px;width:294px;top:424px;"><span style="display:inline-block;transform:translateY(1px) scaleX(.95);transform-origin:100% 50%">حسن مطيع</span></div>
<div class="cell" style="left:1112px;width:144px;top:424px;"><span style="display:inline-block;transform:scaleX(.94);transform-origin:100% 50%">75.00</span></div>
<div class="cell" style="left:962px;width:144px;top:424px;"><span style="display:inline-block;transform:scaleX(.94);transform-origin:100% 50%">75.00</span></div>
<div class="cell" style="left:812px;width:144px;top:424px;"><span style="display:inline-block;transform:scaleX(.94);transform-origin:100% 50%">60.00</span></div>
<div class="cell" style="left:662px;width:144px;top:424px;"><span style="display:inline-block;transform:scaleX(.94);transform-origin:100% 50%">15.00</span></div>
<div class="cell" style="left:511px;width:145px;top:424px;"><span style="display:inline-block;transform:scaleX(.94);transform-origin:100% 50%">%20.00</span></div>
<div class="hl" style="left:0;top:471px;width:1861px;background:#D9D9D9"></div>
<div class="abs" style="left:1862px;top:445px;width:30px;height:26px;background:#F0F0F0;border-bottom:1px solid #C8C8C8"></div>
<div class="cell" style="left:1862px;width:26px;top:448px;">18</div>
<div class="cell" style="left:1712px;width:144px;top:450px;">مبيع.نقدي : 15</div>
<div class="cell" style="left:1562px;width:144px;top:450px;">15-3-2025</div>
<div class="cell" style="left:1262px;width:294px;top:450px;"><span style="display:inline-block;transform:translateY(1px) scaleX(.95);transform-origin:100% 50%">خالد عدنان</span></div>
<div class="cell" style="left:1112px;width:144px;top:450px;"><span style="display:inline-block;transform:scaleX(.94);transform-origin:100% 50%">231.50</span></div>
<div class="cell" style="left:962px;width:144px;top:450px;"><span style="display:inline-block;transform:scaleX(.94);transform-origin:100% 50%">231.50</span></div>
<div class="cell" style="left:812px;width:144px;top:450px;"><span style="display:inline-block;transform:scaleX(.94);transform-origin:100% 50%">144.00</span></div>
<div class="cell" style="left:662px;width:144px;top:450px;"><span style="display:inline-block;transform:scaleX(.94);transform-origin:100% 50%">87.50</span></div>
<div class="cell" style="left:511px;width:145px;top:450px;"><span style="display:inline-block;transform:scaleX(.94);transform-origin:100% 50%">%37.80</span></div>
<div class="hl" style="left:0;top:497px;width:1861px;background:#D9D9D9"></div>
<div class="abs" style="left:1862px;top:471px;width:30px;height:26px;background:#F0F0F0;border-bottom:1px solid #C8C8C8"></div>
<div class="cell" style="left:1862px;width:26px;top:474px;">19</div>
<div class="cell" style="left:1712px;width:144px;top:476px;">مبيع.نقدي : 16</div>
<div class="cell" style="left:1562px;width:144px;top:476px;">15-3-2025</div>
<div class="cell" style="left:1262px;width:294px;top:476px;"><span style="display:inline-block;transform:translateY(1px) scaleX(.95);transform-origin:100% 50%">فتحي صلاح</span></div>
<div class="cell" style="left:1112px;width:144px;top:476px;"><span style="display:inline-block;transform:scaleX(.94);transform-origin:100% 50%">182.50</span></div>
<div class="cell" style="left:962px;width:144px;top:476px;"><span style="display:inline-block;transform:scaleX(.94);transform-origin:100% 50%">182.50</span></div>
<div class="cell" style="left:812px;width:144px;top:476px;"><span style="display:inline-block;transform:scaleX(.94);transform-origin:100% 50%">90.50</span></div>
<div class="cell" style="left:662px;width:144px;top:476px;"><span style="display:inline-block;transform:scaleX(.94);transform-origin:100% 50%">92.00</span></div>
<div class="cell" style="left:511px;width:145px;top:476px;"><span style="display:inline-block;transform:scaleX(.94);transform-origin:100% 50%">%50.41</span></div>
<div class="hl" style="left:0;top:524px;width:1861px;background:#D9D9D9"></div>
<div class="abs" style="left:1862px;top:497px;width:30px;height:27px;background:#F0F0F0;border-bottom:1px solid #C8C8C8"></div>
<div class="cell" style="left:1862px;width:26px;top:500px;">20</div>
<div class="cell" style="left:1712px;width:144px;top:502px;">مبيع.آجل : 4</div>
<div class="cell" style="left:1562px;width:144px;top:502px;">17-3-2025</div>
<div class="cell" style="left:1262px;width:294px;top:502px;"><span style="display:inline-block;transform:translateY(1px) scaleX(.95);transform-origin:100% 50%">محمد سليم</span></div>
<div class="cell" style="left:1112px;width:144px;top:502px;"><span style="display:inline-block;transform:scaleX(.94);transform-origin:100% 50%">1,016.50</span></div>
<div class="cell" style="left:962px;width:144px;top:502px;"><span style="display:inline-block;transform:scaleX(.94);transform-origin:100% 50%">1,016.50</span></div>
<div class="cell" style="left:812px;width:144px;top:502px;"><span style="display:inline-block;transform:scaleX(.94);transform-origin:100% 50%">627.00</span></div>
<div class="cell" style="left:662px;width:144px;top:502px;"><span style="display:inline-block;transform:scaleX(.94);transform-origin:100% 50%">389.50</span></div>
<div class="cell" style="left:511px;width:145px;top:502px;"><span style="display:inline-block;transform:scaleX(.94);transform-origin:100% 50%">%38.32</span></div>
<div class="hl" style="left:0;top:550px;width:1861px;background:#D9D9D9"></div>
<div class="abs" style="left:1862px;top:524px;width:30px;height:26px;background:#F0F0F0;border-bottom:1px solid #C8C8C8"></div>
<div class="cell" style="left:1862px;width:26px;top:527px;">21</div>
<div class="cell" style="left:1712px;width:144px;top:529px;">مبيع.آجل : 5</div>
<div class="cell" style="left:1562px;width:144px;top:529px;">17-3-2025</div>
<div class="cell" style="left:1262px;width:294px;top:529px;"><span style="display:inline-block;transform:translateY(1px) scaleX(.95);transform-origin:100% 50%">فتحي صلاح</span></div>
<div class="cell" style="left:1112px;width:144px;top:529px;"><span style="display:inline-block;transform:scaleX(.94);transform-origin:100% 50%">262.50</span></div>
<div class="cell" style="left:962px;width:144px;top:529px;"><span style="display:inline-block;transform:scaleX(.94);transform-origin:100% 50%">262.50</span></div>
<div class="cell" style="left:812px;width:144px;top:529px;"><span style="display:inline-block;transform:scaleX(.94);transform-origin:100% 50%">174.50</span></div>
<div class="cell" style="left:662px;width:144px;top:529px;"><span style="display:inline-block;transform:scaleX(.94);transform-origin:100% 50%">88.00</span></div>
<div class="cell" style="left:511px;width:145px;top:529px;"><span style="display:inline-block;transform:scaleX(.94);transform-origin:100% 50%">%33.52</span></div>
<div class="hl" style="left:0;top:576px;width:1861px;background:#D9D9D9"></div>
<div class="abs" style="left:1862px;top:550px;width:30px;height:26px;background:#F0F0F0;border-bottom:1px solid #C8C8C8"></div>
<div class="cell" style="left:1862px;width:26px;top:553px;">22</div>
<div class="cell" style="left:1712px;width:144px;top:555px;">مبيع.آجل : 6</div>
<div class="cell" style="left:1562px;width:144px;top:555px;">17-3-2025</div>
<div class="cell" style="left:1262px;width:294px;top:555px;"><span style="display:inline-block;transform:translateY(1px) scaleX(.95);transform-origin:100% 50%">حسن مطيع</span></div>
<div class="cell" style="left:1112px;width:144px;top:555px;"><span style="display:inline-block;transform:scaleX(.94);transform-origin:100% 50%">106.00</span></div>
<div class="cell" style="left:962px;width:144px;top:555px;"><span style="display:inline-block;transform:scaleX(.94);transform-origin:100% 50%">106.00</span></div>
<div class="cell" style="left:812px;width:144px;top:555px;"><span style="display:inline-block;transform:scaleX(.94);transform-origin:100% 50%">70.00</span></div>
<div class="cell" style="left:662px;width:144px;top:555px;"><span style="display:inline-block;transform:scaleX(.94);transform-origin:100% 50%">36.00</span></div>
<div class="cell" style="left:511px;width:145px;top:555px;"><span style="display:inline-block;transform:scaleX(.94);transform-origin:100% 50%">%33.96</span></div>
<div class="hl" style="left:0;top:602px;width:1861px;background:#D9D9D9"></div>
<div class="abs" style="left:1862px;top:576px;width:30px;height:26px;background:#F0F0F0;border-bottom:1px solid #C8C8C8"></div>
<div class="cell" style="left:1862px;width:26px;top:579px;">23</div>
<div class="cell" style="left:1712px;width:144px;top:581px;">مبيع.آجل : 7</div>
<div class="cell" style="left:1562px;width:144px;top:581px;">17-3-2025</div>
<div class="cell" style="left:1262px;width:294px;top:581px;"><span style="display:inline-block;transform:translateY(1px) scaleX(.95);transform-origin:100% 50%">خالد عدنان</span></div>
<div class="cell" style="left:1112px;width:144px;top:581px;"><span style="display:inline-block;transform:scaleX(.94);transform-origin:100% 50%">4,192.50</span></div>
<div class="cell" style="left:962px;width:144px;top:581px;"><span style="display:inline-block;transform:scaleX(.94);transform-origin:100% 50%">4,192.50</span></div>
<div class="cell" style="left:812px;width:144px;top:581px;"><span style="display:inline-block;transform:scaleX(.94);transform-origin:100% 50%">2,459.00</span></div>
<div class="cell" style="left:662px;width:144px;top:581px;"><span style="display:inline-block;transform:scaleX(.94);transform-origin:100% 50%">1,733.50</span></div>
<div class="cell" style="left:511px;width:145px;top:581px;"><span style="display:inline-block;transform:scaleX(.94);transform-origin:100% 50%">%41.35</span></div>
<div class="hl" style="left:0;top:629px;width:1861px;background:#D9D9D9"></div>
<div class="abs" style="left:1862px;top:602px;width:30px;height:27px;background:#F0F0F0;border-bottom:1px solid #C8C8C8"></div>
<div class="cell" style="left:1862px;width:26px;top:605px;">24</div>
<div class="cell" style="left:1712px;width:144px;top:607px;">مبيع.آجل : 8</div>
<div class="cell" style="left:1562px;width:144px;top:607px;">20-3-2025</div>
<div class="cell" style="left:1262px;width:294px;top:607px;"><span style="display:inline-block;transform:translateY(1px) scaleX(.95);transform-origin:100% 50%">عبدالله الغامدي</span></div>
<div class="cell" style="left:1112px;width:144px;top:607px;"><span style="display:inline-block;transform:scaleX(.94);transform-origin:100% 50%">276.75</span></div>
<div class="cell" style="left:962px;width:144px;top:607px;"><span style="display:inline-block;transform:scaleX(.94);transform-origin:100% 50%">276.75</span></div>
<div class="cell" style="left:812px;width:144px;top:607px;"><span style="display:inline-block;transform:scaleX(.94);transform-origin:100% 50%">174.25</span></div>
<div class="cell" style="left:662px;width:144px;top:607px;"><span style="display:inline-block;transform:scaleX(.94);transform-origin:100% 50%">102.50</span></div>
<div class="cell" style="left:511px;width:145px;top:607px;"><span style="display:inline-block;transform:scaleX(.94);transform-origin:100% 50%">%37.04</span></div>
<div class="hl" style="left:0;top:655px;width:1861px;background:#D9D9D9"></div>
<div class="abs" style="left:1862px;top:629px;width:30px;height:26px;background:#F0F0F0;border-bottom:1px solid #C8C8C8"></div>
<div class="cell" style="left:1862px;width:26px;top:632px;">25</div>
<div class="cell" style="left:1712px;width:144px;top:634px;">مبيع.نقدي : 17</div>
<div class="cell" style="left:1562px;width:144px;top:634px;">20-3-2025</div>
<div class="cell" style="left:1262px;width:294px;top:634px;"><span style="display:inline-block;transform:translateY(1px) scaleX(.95);transform-origin:100% 50%">عميل نقدي</span></div>
<div class="cell" style="left:1112px;width:144px;top:634px;"><span style="display:inline-block;transform:scaleX(.94);transform-origin:100% 50%">54.00</span></div>
<div class="cell" style="left:962px;width:144px;top:634px;"><span style="display:inline-block;transform:scaleX(.94);transform-origin:100% 50%">54.00</span></div>
<div class="cell" style="left:812px;width:144px;top:634px;"><span style="display:inline-block;transform:scaleX(.94);transform-origin:100% 50%">26.00</span></div>
<div class="cell" style="left:662px;width:144px;top:634px;"><span style="display:inline-block;transform:scaleX(.94);transform-origin:100% 50%">28.00</span></div>
<div class="cell" style="left:511px;width:145px;top:634px;"><span style="display:inline-block;transform:scaleX(.94);transform-origin:100% 50%">%51.85</span></div>
</div>
<div class="abs" style="left:4px;top:268px;width:22px;height:639px;background:#F0F0F0"></div>
<div class="abs" style="left:6px;top:269px;width:17px;height:17px;background:#D6D6D6"></div>
<svg class="abs" style="left:9px;top:274px" width="10" height="6" viewBox="0 0 10 6"><path d="M0 5.5H10L5 0Z" fill="#404040"/></svg>
<div class="abs" style="left:6px;top:288px;width:17px;height:231px;background:#D6D6D6"></div>
<div class="abs" style="left:6px;top:888px;width:17px;height:17px;background:#D6D6D6"></div>
<svg class="abs" style="left:9px;top:894px" width="10" height="6" viewBox="0 0 10 6"><path d="M0 0H10L5 5.5Z" fill="#404040"/></svg>
<div class="abs" style="left:2px;top:907px;width:1916px;height:8px;background:#E3E3E3;border-top:1px solid #B0B0B0;border-bottom:1px solid #B0B0B0"></div>
<div class="abs" style="left:3px;top:915px;width:1915px;height:81px;background:#fff"></div>
<div class="abs" style="left:4px;top:915px;width:1914px;height:27px;background:#F0F0F0"></div>
<div class="hl" style="left:4px;top:942px;width:683px;background:#A0A0A0"></div>
<div class="hl" style="left:687px;top:942px;width:1200px;background:#E2E2E2"></div>
<div class="hl" style="left:1887px;top:942px;width:31px;background:#A0A0A0"></div>
<div class="vl" style="left:3px;top:915px;height:81px;background:#A0A0A0"></div>
<div class="vl" style="left:686px;top:916px;height:26px;background:#A0A0A0"></div>
<div class="vl" style="left:837px;top:916px;height:26px;background:#A0A0A0"></div>
<div class="vl" style="left:987px;top:916px;height:26px;background:#A0A0A0"></div>
<div class="vl" style="left:1137px;top:916px;height:26px;background:#A0A0A0"></div>
<div class="vl" style="left:1287px;top:916px;height:26px;background:#A0A0A0"></div>
<div class="vl" style="left:1587px;top:916px;height:26px;background:#A0A0A0"></div>
<div class="vl" style="left:1737px;top:916px;height:26px;background:#A0A0A0"></div>
<div class="vl" style="left:1887px;top:916px;height:26px;background:#A0A0A0"></div>
<div class="cell" style="left:1738px;width:149px;top:921px;text-align:center"><span style="display:inline-block;transform:scaleX(.95)">_</span></div>
<div class="cell" style="left:1588px;width:149px;top:921px;text-align:center"><span style="display:inline-block;transform:scaleX(.95)">_</span></div>
<div class="cell" style="left:1288px;width:299px;top:921px;text-align:center"><span style="display:inline-block;transform:scaleX(.95)">_</span></div>
<div class="cell" style="left:1138px;width:149px;top:921px;text-align:center"><span style="display:inline-block;transform:scaleX(.95)">المجموع</span></div>
<div class="cell" style="left:988px;width:149px;top:921px;text-align:center"><span style="display:inline-block;transform:scaleX(.95)">المبيعات</span></div>
<div class="cell" style="left:838px;width:149px;top:921px;text-align:center"><span style="display:inline-block;transform:scaleX(.95)">التكلفة</span></div>
<div class="cell" style="left:687px;width:150px;top:921px;text-align:center"><span style="display:inline-block;transform:scaleX(.95)">الأرباح</span></div>
<div class="abs" style="left:1888px;top:943px;width:30px;height:26px;background:#F0F0F0;border-bottom:1px solid #C8C8C8"></div>
<div class="cell" style="left:1888px;width:26px;top:945px">1</div>
<div class="cell" style="left:1738px;width:144px;top:947px"></div>
<div class="cell" style="left:1588px;width:144px;top:947px"></div>
<div class="cell" style="left:1288px;width:294px;top:947px"></div>
<div class="cell" style="left:1138px;width:144px;top:947px"><span style="display:inline-block;transform:scaleX(.94);transform-origin:100% 50%">50,940.40</span></div>
<div class="cell" style="left:988px;width:144px;top:947px"><span style="display:inline-block;transform:scaleX(.94);transform-origin:100% 50%">50,940.40</span></div>
<div class="cell" style="left:838px;width:144px;top:947px"><span style="display:inline-block;transform:scaleX(.94);transform-origin:100% 50%">13,680.04</span></div>
<div class="cell" style="left:687px;width:145px;top:947px"><span style="display:inline-block;transform:scaleX(.94);transform-origin:100% 50%">37,260.36</span></div>
<div class="abs" style="left:1888px;top:969px;width:30px;height:26px;background:#F0F0F0;border-bottom:1px solid #C8C8C8"></div>
<div class="cell" style="left:1888px;width:26px;top:971px">2</div>
<div class="cell" style="left:1738px;width:144px;top:973px"></div>
<div class="cell" style="left:1588px;width:144px;top:973px"></div>
<div class="cell" style="left:1288px;width:294px;top:973px"></div>
<div class="cell" style="left:1138px;width:144px;top:973px"></div>
<div class="cell" style="left:988px;width:144px;top:973px"></div>
<div class="cell" style="left:838px;width:144px;top:973px"><span style="display:inline-block;transform:scaleX(.94);transform-origin:100% 50%">26.85 %</span></div>
<div class="cell" style="left:687px;width:145px;top:973px"><span style="display:inline-block;transform:scaleX(.94);transform-origin:100% 50%">73.15 %</span></div>
<div class="vl" style="left:686px;top:943px;height:52px;background:#D4D4D4"></div>
<div class="vl" style="left:837px;top:943px;height:52px;background:#C6D1E2"></div>
<div class="vl" style="left:987px;top:943px;height:52px;background:#C6D1E2"></div>
<div class="vl" style="left:1137px;top:943px;height:52px;background:#C6D1E2"></div>
<div class="vl" style="left:1287px;top:943px;height:52px;background:#C6D1E2"></div>
<div class="vl" style="left:1587px;top:943px;height:52px;background:#C6D1E2"></div>
<div class="vl" style="left:1737px;top:943px;height:52px;background:#C6D1E2"></div>
<div class="vl" style="left:1887px;top:943px;height:52px;background:#A0A0A0"></div>
<div class="hl" style="left:26px;top:968px;width:1861px;background:#D9D9D9"></div>
<div class="abs" style="left:4px;top:943px;width:22px;height:52px;background:#F0F0F0"></div>
<div class="abs" style="left:6px;top:945px;width:17px;height:16px;background:#D6D6D6"></div>
<svg class="abs" style="left:9px;top:950px" width="10" height="6" viewBox="0 0 10 6"><path d="M0 5.5H10L5 0Z" fill="#404040"/></svg>
<div class="abs" style="left:6px;top:963px;width:17px;height:10px;background:#D6D6D6"></div>
<div class="abs" style="left:6px;top:977px;width:17px;height:17px;background:#D6D6D6"></div>
<svg class="abs" style="left:9px;top:983px" width="10" height="6" viewBox="0 0 10 6"><path d="M0 0H10L5 5.5Z" fill="#404040"/></svg>
<div class="hl" style="left:2px;top:995px;width:1916px;height:2px;background:#B0B0B0"></div>
<div class="t r" style="left:7px;top:1005px">62 عنصراً</div>
<div class="vl" style="left:94px;top:997px;height:30px;background:#E4E4E4"></div>
</body></html>
